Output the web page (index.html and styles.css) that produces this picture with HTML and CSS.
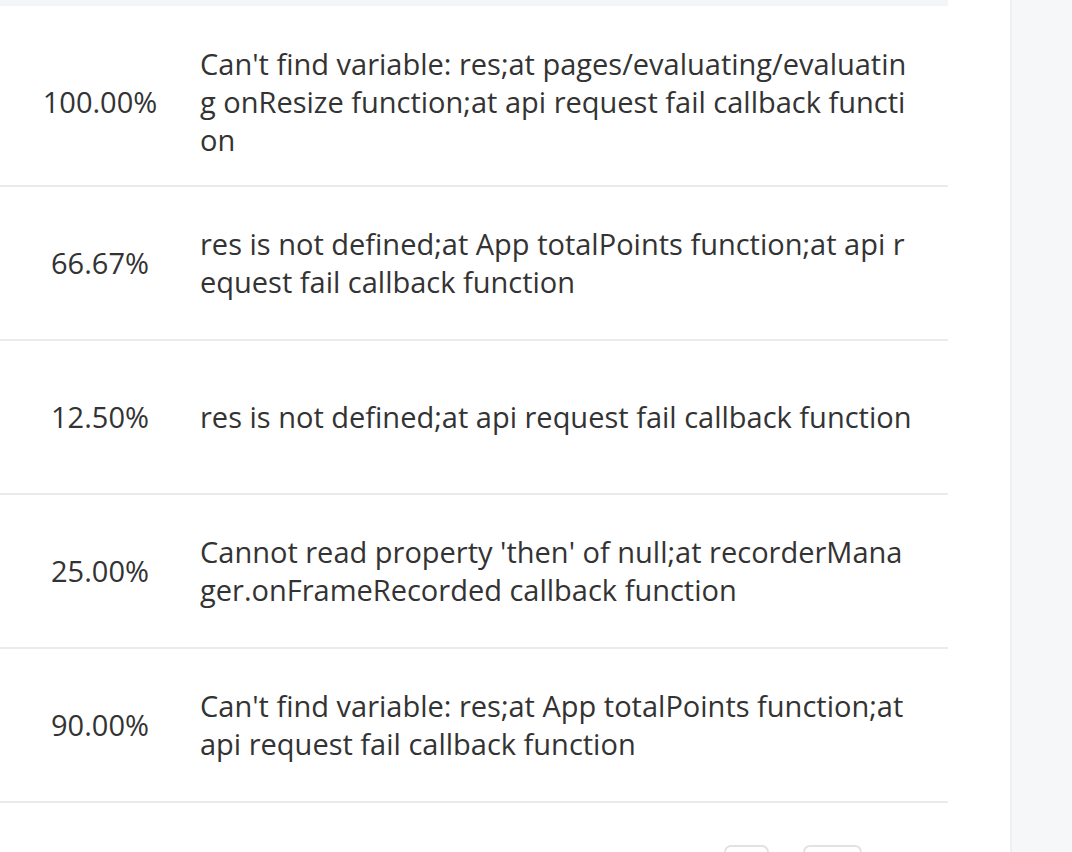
FILE: index.html
```html
<!DOCTYPE html>
<html lang="en">
<head>
<meta charset="utf-8">
<title>Errors</title>
<link rel="stylesheet" href="styles.css">
</head>
<body>
<div class="layout">
  <main class="main">
    <div class="head-strip"></div>
    <table class="err-table">
      <colgroup><col class="c-rate"><col class="c-msg"></colgroup>
      <tbody>
        <tr class="row first">
          <td class="rate">100.00%</td>
          <td class="msg">Can't find variable: res;at pages/evaluating/evaluatin<br>g onResize function;at api request fail callback functi<br>on</td>
        </tr>
        <tr class="row">
          <td class="rate">66.67%</td>
          <td class="msg">res is not defined;at App totalPoints function;at api r<br>equest fail callback function</td>
        </tr>
        <tr class="row">
          <td class="rate">12.50%</td>
          <td class="msg">res is not defined;at api request fail callback function</td>
        </tr>
        <tr class="row">
          <td class="rate">25.00%</td>
          <td class="msg">Cannot read property 'then' of null;at recorderMana<br>ger.onFrameRecorded callback function</td>
        </tr>
        <tr class="row">
          <td class="rate">90.00%</td>
          <td class="msg">Can't find variable: res;at App totalPoints function;at<br>api request fail callback function</td>
        </tr>
      </tbody>
    </table>
    <nav class="pager">
      <span class="pg-btn prev"></span>
      <span class="pg-btn page"></span>
    </nav>
  </main>
  <aside class="side"></aside>
</div>
</body>
</html>
```
FILE: styles.css
```css
html, body {
  margin: 0;
  padding: 0;
  background: #ffffff;
}
body {
  font-family: "Open Sans", "Noto Sans", sans-serif;
  color: #333333;
  overflow: hidden;
}
.layout {
  display: grid;
  grid-template-columns: 948px 1fr 62px;
  height: 852px;
}
.main {
  grid-column: 1;
  display: flex;
  flex-direction: column;
}
.head-strip {
  height: 6px;
  background: #f4f5f7;
}
.err-table {
  width: 948px;
  border-collapse: collapse;
  table-layout: fixed;
  font-size: 29px;
  line-height: 38px;
}
.c-rate { width: 200px; }
.row td {
  height: 152px;
  padding: 0;
  border-bottom: 2px solid #ebebeb;
  vertical-align: middle;
}
.row.first td {
  height: 167px;
  padding-top: 12px;
}
.rate {
  text-align: center;
}
.msg {
  white-space: nowrap;
  padding-right: 20px;
}
.pager {
  display: flex;
  justify-content: flex-end;
  gap: 34px;
  padding: 42px 86px 0 0;
}
.pg-btn {
  display: block;
  height: 60px;
  border: 2px solid #e2e2e2;
  border-radius: 7px;
  box-sizing: border-box;
  background: #fff;
}
.pg-btn.prev { width: 45px; }
.pg-btn.page { width: 59px; }
.side {
  grid-column: 3;
  background: #f6f7f9;
  border-left: 2px solid #eef0f3;
}
```
